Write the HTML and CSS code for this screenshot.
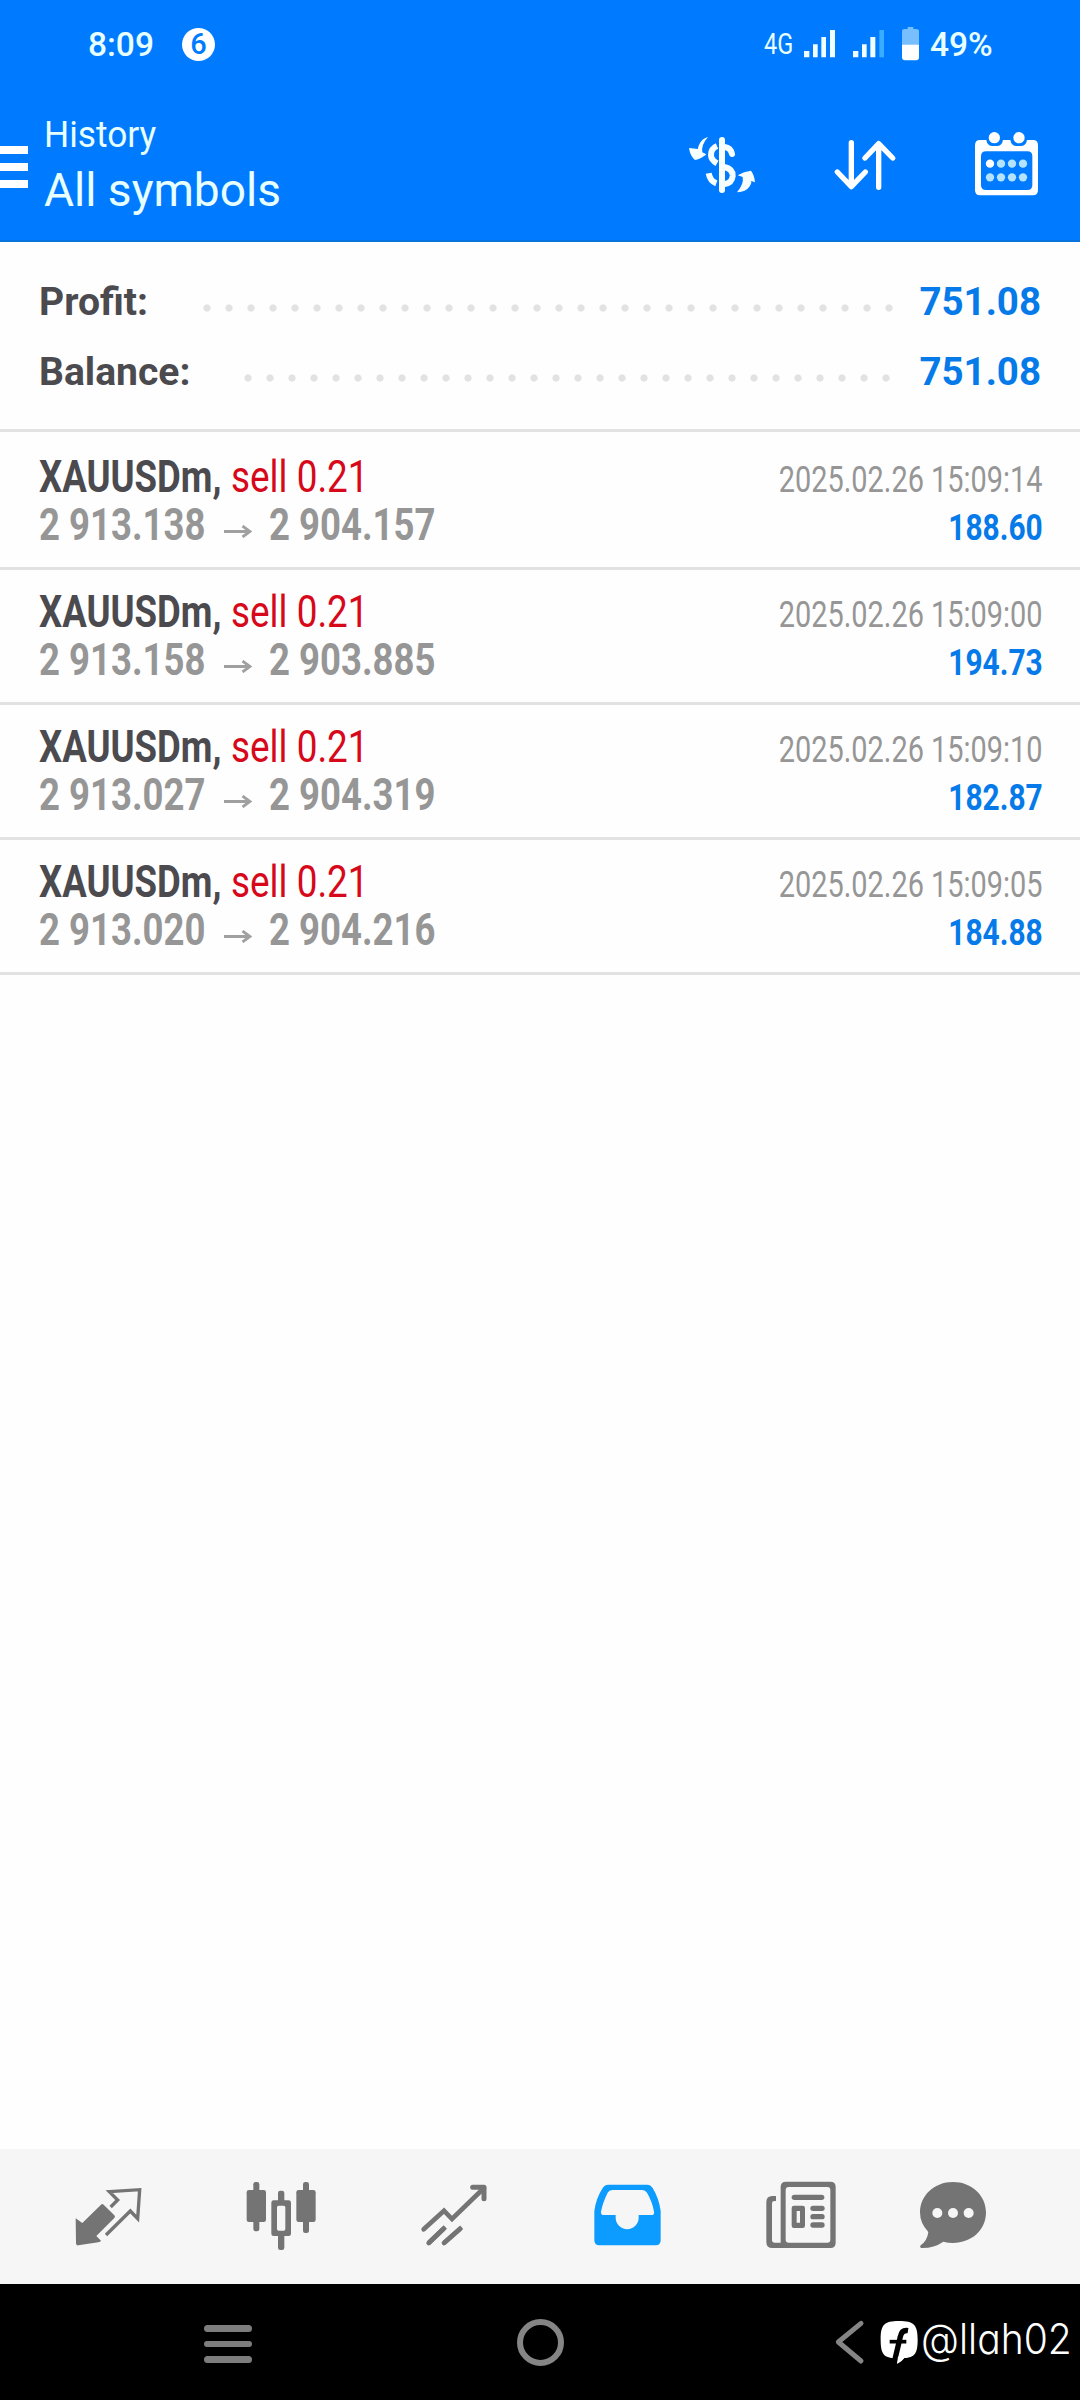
FILE: index.html
```html
<!DOCTYPE html>
<html lang="en"><head><meta charset="utf-8"><title>History</title><link rel="stylesheet" href="styles.css"></head>
<body>
<div class="screen">
<header class="header">
<div class="status">
<span class="clock">8:09</span><span class="badge">6</span>
<span class="net">4G</span>
<svg class="signals" viewBox="426 78 360 108" fill="#f0ffff"><path d="M432 153h16v19h-16zM459 133h14v39h-14zM484 111h14v61h-14zM510 90h15v82h-15zM579 153h16v19h-16zM606 133h14v39h-14zM631 111h15v61h-15z"/><path fill="#38adff" d="M658 90h14v82h-14z"/><path fill="#78bfff" d="M726 136V94q0-7 9-7h8v-6h17v6h8q9 0 9 7v42z"/><path fill="#fff" d="M726 134h51v38q0 9-9 9h-33q-9 0-9-9z"/></svg>
<span class="percent">49%</span>
</div>
<div class="toolbar">
<div class="menu"><i></i><i></i><i></i></div>
<div class="titles"><div class="kicker">History</div><div class="title">All symbols</div></div>
<svg class="i-dollar" viewBox="78 390 216 210" fill="none" stroke="#f8ffff" stroke-linecap="round"><path d="M186 420V570" stroke-width="18"/><path stroke-width="18" stroke-linecap="butt" d="M171 438Q152 446 153 466Q154 480 171 490M194 501Q219 507 218 528Q216 549 194 552M146 520Q150 543 169 550"/><path stroke-width="18" d="M194 441Q212 443 216 462"/><path fill="#f8ffff" stroke="none" d="M144 411Q127 416 120 429T114 447L87 444Q90 467 105 480Q124 477 139 463L127 457Q123 435 144 411ZM231 577Q258 575 268 560T272 542L285 547Q283 525 273 512Q252 514 233 526L248 531Q252 552 231 577Z"/></svg>
<svg class="i-sort" viewBox="519 390 192 210" fill="none" stroke="#fff" stroke-width="16" stroke-linecap="round" stroke-linejoin="round"><path d="M574 428V558M532 516L574 560L616 516M656 562V432M615 474L656 431L698 474"/></svg>
<svg class="i-cal" viewBox="939 390 204 210" fill="#fff"><path fill-rule="evenodd" d="M960 420H979Q982 438 998 438H1010Q1026 438 1029 420H1051Q1054 438 1070 438H1082Q1098 438 1101 420H1119Q1134 420 1134 436V571Q1134 586 1119 586H960Q945 586 945 571V436Q945 420 960 420ZM978 454Q963 454 963 469V555Q963 570 978 570H1102Q1117 570 1117 555V469Q1117 454 1102 454Z"/><circle cx="1003" cy="413" r="17"/><circle cx="1077" cy="413" r="17"/><circle cx="990" cy="491" r="12.500"/><g fill="#b4e3ff"><circle cx="1023" cy="491" r="12.500"/><circle cx="1056" cy="491" r="12.500"/><circle cx="1089" cy="491" r="12.500"/><circle cx="990" cy="532" r="12.500"/><circle cx="1023" cy="532" r="12.500"/><circle cx="1056" cy="532" r="12.500"/><circle cx="1089" cy="532" r="12.500"/></g></svg>
</div>
</header>
<section class="summary">
<div class="sum"><b>Profit:</b><span class="dots d32"></span><b class="val">751.08</b></div>
<div class="sum"><b>Balance:</b><span class="dots d30"></span><b class="val">751.08</b></div>
</section>
<main class="deals">
<div class="deal"><div class="line"><span class="sym">XAUUSDm,</span><span class="side">sell 0.21</span><span class="date">2025.02.26 15:09:14</span></div><div class="line"><span class="price">2 913.138</span><svg class="arrow" viewBox="0 0 28 13"><path d="M0 6.500H25M18.500 1L26 6.500L18.500 12"/></svg><span class="price">2 904.157</span><span class="gain">188.60</span></div></div>
<div class="deal"><div class="line"><span class="sym">XAUUSDm,</span><span class="side">sell 0.21</span><span class="date">2025.02.26 15:09:00</span></div><div class="line"><span class="price">2 913.158</span><svg class="arrow" viewBox="0 0 28 13"><path d="M0 6.500H25M18.500 1L26 6.500L18.500 12"/></svg><span class="price">2 903.885</span><span class="gain">194.73</span></div></div>
<div class="deal"><div class="line"><span class="sym">XAUUSDm,</span><span class="side">sell 0.21</span><span class="date">2025.02.26 15:09:10</span></div><div class="line"><span class="price">2 913.027</span><svg class="arrow" viewBox="0 0 28 13"><path d="M0 6.500H25M18.500 1L26 6.500L18.500 12"/></svg><span class="price">2 904.319</span><span class="gain">182.87</span></div></div>
<div class="deal"><div class="line"><span class="sym">XAUUSDm,</span><span class="side">sell 0.21</span><span class="date">2025.02.26 15:09:05</span></div><div class="line"><span class="price">2 913.020</span><svg class="arrow" viewBox="0 0 28 13"><path d="M0 6.500H25M18.500 1L26 6.500L18.500 12"/></svg><span class="price">2 904.216</span><span class="gain">184.88</span></div></div>
</main>
<nav class="tabs">
<svg class="t1" viewBox="222 150 210 216" fill="#747474"><path d="M227 265L247 279L303 224Q307 220 311 224L343 256Q347 260 343 264L289 318L303 332Q301 336 295 337L235 346Q228 347 228 340Z"/><path fill="none" stroke="#747474" stroke-width="10" d="M332 231L353 210L330 187L328 185L419 179L413 266L391 243L318 315"/></svg>
<svg class="t2" viewBox="735 150 216 216" fill="#747474"><rect x="760" y="156" width="18" height="148" rx="7"/><rect x="740" y="180" width="58" height="96" rx="7"/><rect x="909" y="156" width="18" height="153" rx="7"/><rect x="889" y="180" width="58" height="96" rx="7"/><rect x="834" y="182" width="19" height="40" rx="7"/><rect x="834" y="305" width="19" height="55" rx="7"/><path fill-rule="evenodd" d="M821 211H866Q873 211 873 218V311Q873 318 866 318H821Q814 318 814 311V218Q814 211 821 211ZM836 227Q831 227 831 232V297Q831 302 836 302H851Q856 302 856 297V232Q856 227 851 227Z"/></svg>
<svg class="t3" viewBox="180 150 210 216" fill="none" stroke="#747474" stroke-width="14"><path d="M191 298L252 242L276 267L372 174" stroke-linecap="round"/><path d="M338 172H372V206" stroke-width="15" stroke-linecap="round" stroke-linejoin="round"/><path stroke-linecap="round" d="M206 339L250 297M252 339L299 298"/><path d="M206 339L256 291M252 339L305 292"/></svg>
<svg class="t4" viewBox="699 150 210 216" fill="#0c9cff"><path fill-rule="evenodd" d="M745 164H861Q872 164 878 174Q897 205 902 243V331Q902 346 887 346H718Q703 346 703 331V243Q708 205 728 174Q734 164 745 164ZM757 180Q747 180 743 188Q728 218 723 245Q722 255 732 255H767V263A34 34 0 0 0 836 263V255H874Q884 255 882 245Q877 215 861 188Q856 180 847 180Z"/></svg>
<svg class="t5" viewBox="135 150 216 216" fill="#747474"><path fill-rule="evenodd" d="M198 155H331Q347 155 347 171V338Q347 354 331 354H157Q139 354 139 336V216Q139 198 157 198H168V213H163Q156 213 156 220V331Q156 338 163 338H182V171Q182 155 198 155ZM206 171Q197 171 197 180V329Q197 338 206 338H322Q331 338 331 329V180Q331 171 322 171Z"/><rect x="215" y="194" width="98" height="16" rx="8"/><path fill-rule="evenodd" d="M222 227H248Q255 227 255 234V287Q255 294 248 294H222Q215 294 215 287V234Q215 227 222 227ZM230 243V278H240V243Z"/><rect x="271" y="227" width="43" height="16" rx="8"/><rect x="271" y="252" width="43" height="16" rx="8"/><rect x="271" y="277" width="43" height="16" rx="8"/></svg>
<svg class="t6" viewBox="594 150 210 216" fill="#747474"><path d="M699 156C756 156 798 197 798 247C798 300 755 339 699 339Q684 339 670 335Q641 355 604 354Q598 352 602 346Q622 332 625 306Q600 280 600 247C600 197 642 156 699 156Z"/><g fill="#f6f6f6"><circle cx="652" cy="249" r="15"/><circle cx="699" cy="249" r="15"/><circle cx="746" cy="249" r="15"/></g></svg>
</nav>
<footer class="sysbar">
<div class="recents"><i></i><i></i><i></i></div>
<div class="home"></div>
<svg class="back" viewBox="342 567 96 141" fill="none" stroke="#858585" stroke-width="15" stroke-linecap="round" stroke-linejoin="round"><path d="M423 580L355 636L423 693"/></svg>
<svg class="logo" viewBox="480 567 117 141"><path fill="#fff" d="M537 573C582 573 593 584 593 629C593 671 584 682 553 684Q547 692 532 701L535 685C492 685 482 674 482 629C482 584 492 573 537 573Z"/><path fill="none" stroke="#000" stroke-width="16" d="M564 602Q545 599 541 620L524 692"/><path stroke="#000" stroke-width="11" d="M509 635H559"/><path fill="#fff" d="M534 680L556 680Q548 692 531 701Z"/></svg>
<span class="handle">@llah02</span>
</footer>
</div>
</body></html>
```
FILE: styles.css
```css
body{margin:0;background:#fff;font-family:Roboto,sans-serif}
svg{display:block;flex:none}
.screen{width:1080px;height:2400px;display:flex;flex-direction:column;background:#fefefe;overflow:hidden}
.header{height:242px;background:#007bff;color:#e8ffff;box-sizing:border-box;border-bottom:2px solid #0874dc}
.status{height:88px;display:flex;align-items:flex-start;padding-left:88px;white-space:nowrap}
.clock{font-size:33.500px;line-height:40px;margin-top:25px;width:94px;font-weight:500}
.badge{width:33px;height:33px;border-radius:50%;background:#fff;color:#007bff;font-size:29px;line-height:33px;text-align:center;margin-top:28px;font-weight:500}
.net{margin-left:549px;margin-top:27px;width:38px;font-size:29px;line-height:34px;transform:scaleX(.81);transform-origin:0 0}
.signals{width:120px;height:36px;margin-top:26px}
.percent{font-size:33.500px;line-height:40px;margin-top:25px;margin-left:8px;font-weight:500}
.toolbar{display:flex;align-items:flex-start}
.menu{width:28px;display:flex;flex-direction:column;gap:9px;padding-top:58px}
.menu i{height:8px;background:#fff}
.titles{width:642px;margin-left:16px;padding-top:25px;white-space:nowrap}
.kicker{font-size:36px;line-height:44px;transform:scaleX(.98);transform-origin:0 0}
.title{font-size:47px;line-height:56px;margin-top:5px;transform:scaleX(.98);transform-origin:0 0}
.i-dollar{width:72px;height:70px;margin-top:42px}
.i-sort{width:64px;height:70px;margin:42px 0 0 75px}
.i-cal{width:68px;height:70px;margin:42px 0 0 76px}
.summary{border-bottom:3px solid #e2e2e2;padding:25px 39px 0;height:162px}
.sum{height:70px;display:flex;align-items:flex-start;font-size:38.500px;line-height:70px;color:#4b4a4f}
.sum b:first-child{transform:scaleX(1.015);transform-origin:0 0}
.sum .val{color:#057ae8;flex:none}
.dots{height:8px;margin:37px 19px 0 auto;background:radial-gradient(circle at 11px 4px,#e2e2e2 3.200px,transparent 4px) 0 0/22px 8px repeat-x}
.d32{width:704px}
.d30{width:660px;margin-right:22px}
.deals{flex:1;padding-top:3px}
.deal{height:132px;border-bottom:3px solid #e2e2e2}
.deal .line:first-child{padding-top:18px}
.line{display:flex;align-items:baseline;height:48px;line-height:48px;padding:0 37px 0 39px;white-space:nowrap;font-size:44px}
.sym{width:192px;font-weight:700;color:#4b4a4f;transform:scaleX(.83);transform-origin:0 0}
.side{color:#d6081a;transform:scaleX(.838);transform-origin:0 0}
.date{margin-left:auto;font-size:36px;color:#969696;transform:scaleX(.803);transform-origin:100% 0}
.price{width:165px;font-weight:700;color:#969696;transform:scaleX(.83);transform-origin:0 0}
.arrow{width:28px;height:13px;margin:0 17px 0 20px;align-self:flex-start;margin-top:24px;fill:none;stroke:#a0a0a0;stroke-width:2.800}
.gain{margin-left:auto;font-size:36px;font-weight:700;color:#057ae8;transform:scaleX(.83);transform-origin:100% 0}
.tabs{height:135px;background:#f6f6f6;display:flex;align-items:flex-start;padding:31px 0 0 74px;box-sizing:border-box}
.tabs svg{height:72px;width:70px}
.tabs .t2,.tabs .t5{width:72px}
.t2{margin-left:101px}.t3,.t4{margin-left:103px}.t5{margin-left:102px}.t6{margin-left:81px}
.sysbar{height:116px;background:#000;display:flex;align-items:flex-start;white-space:nowrap}
.recents{flex:none;margin:41px 0 0 204px;width:48px;display:flex;flex-direction:column;gap:9px}
.recents i{height:6.500px;border-radius:4px;background:#7d7d7d}
.home{flex:none;box-sizing:border-box;width:47px;height:47px;border:6px solid #858585;border-radius:50%;margin:35px 0 0 265px}
.back{width:32px;height:47px;margin:35px 0 0 270px}
.logo{width:39px;height:47px;margin:35px 0 0 14px}
.handle{flex:none;width:150px;font-family:Inter,sans-serif;font-feature-settings:"cv11";font-weight:300;font-size:42px;line-height:50px;color:#fff;margin:30px 0 0 2px;transform:scaleX(.93);transform-origin:0 0}
```
